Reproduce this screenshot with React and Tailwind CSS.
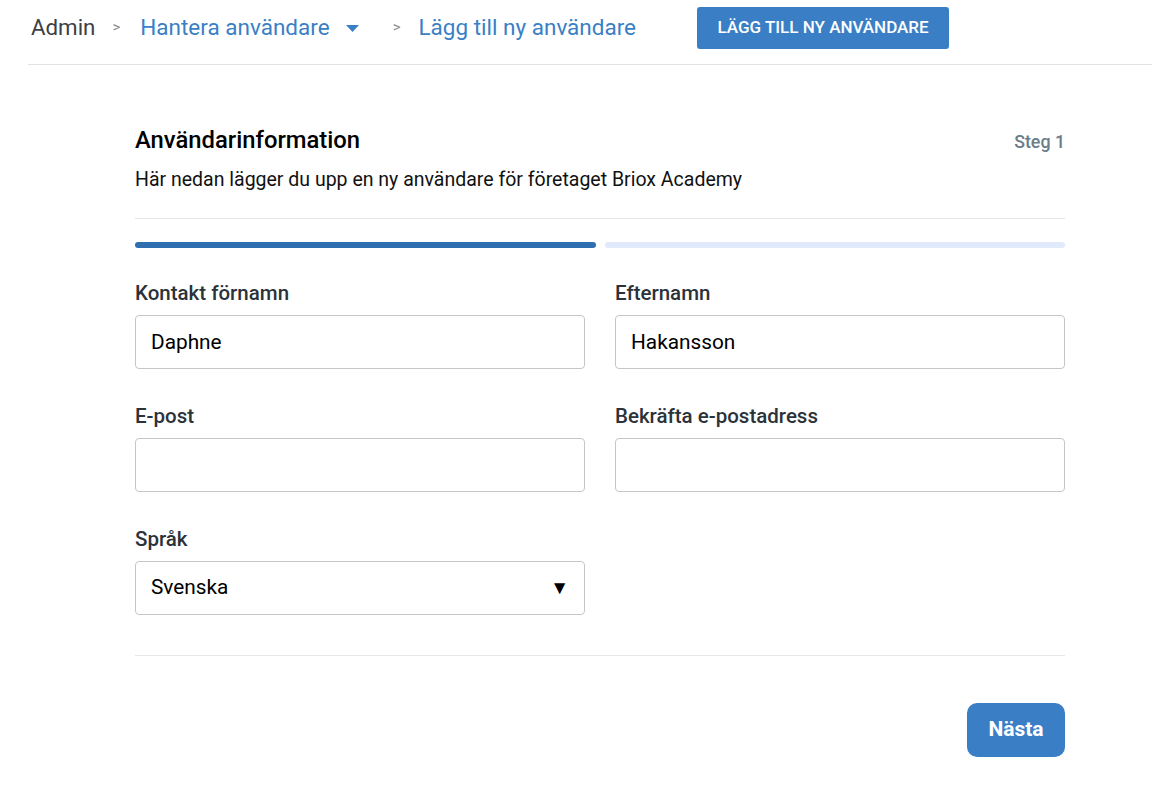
import { useState } from 'react'

function Field({ label, value, onChange }) {
  return (
    <div className="flex flex-col">
      <label className="mb-[10px] text-[20.5px] font-medium leading-[24px] text-[#2b323a]">{label}</label>
      <input
        value={value}
        onChange={e => onChange(e.target.value)}
        className="h-[54px] w-full rounded-[4px] border border-[#c6c6c6] px-[15px] text-[20.8px] text-black outline-none"
      />
    </div>
  )
}

export default function App() {
  const [fornamn, setFornamn] = useState('Daphne')
  const [efternamn, setEfternamn] = useState('Hakansson')
  const [epost, setEpost] = useState('')
  const [bekrafta, setBekrafta] = useState('')
  const [sprak, setSprak] = useState('Svenska')

  return (
    <div className="min-h-screen bg-white font-['Roboto',sans-serif]">
      {/* Breadcrumbs */}
      <div className="ml-[28px] flex h-[65px] items-center border-b border-[#e2e2e2] pl-[3px] pb-[9px]">
        <span className="text-[22.3px] text-[#3c4045]">Admin</span>
        <span className="ml-[17px] text-[15px] text-[#8a8a8a]">&gt;</span>
        <button className="ml-[20px] flex items-center text-[22.5px] text-[#3a7fc5]">
          Hantera användare
          <svg width="13" height="8" viewBox="0 0 13 8" className="ml-[16px] mt-[2px]">
            <path d="M0 0 L13 0 L6.5 7 Z" fill="#3a7fc5" />
          </svg>
        </button>
        <span className="ml-[34px] text-[15px] text-[#8a8a8a]">&gt;</span>
        <span className="ml-[18px] text-[22.5px] text-[#3a7fc5]">Lägg till ny användare</span>
        <button className="ml-[61px] h-[42px] w-[252px] rounded-[3px] bg-[#3a7fc5] text-[17px] font-medium uppercase text-white">
          Lägg till ny användare
        </button>
      </div>

      {/* Form card */}
      <div className="w-[930px] pt-[61px]" style={{ marginLeft: 135 }}>
        <div className="flex items-start justify-between">
          <h1 className="text-[23.8px] font-medium leading-[28px] text-black">Användarinformation</h1>
          <span className="mt-[3px] text-[17.8px] font-medium text-[#6b7c8a]">Steg 1</span>
        </div>
        <p className="mt-[12px] text-[19.5px] leading-[24px] text-[#111]">
          Här nedan lägger du upp en ny användare för företaget Briox Academy
        </p>
        <div className="mt-[26px] border-t border-[#e6e6e6]" />

        <div className="mt-[23px] flex gap-[9px]">
          <div className="h-[6px] flex-1 rounded-full bg-[#2f6fb0]" />
          <div className="h-[6px] flex-1 rounded-full bg-[#e1eafa]" />
        </div>

        <div className="mt-[33px] grid grid-cols-2 gap-x-[30px] gap-y-[35px]">
          <Field label="Kontakt förnamn" value={fornamn} onChange={setFornamn} />
          <Field label="Efternamn" value={efternamn} onChange={setEfternamn} />
          <Field label="E-post" value={epost} onChange={setEpost} />
          <Field label="Bekräfta e-postadress" value={bekrafta} onChange={setBekrafta} />
          <div className="flex flex-col">
            <label className="mb-[10px] text-[20.5px] font-medium leading-[24px] text-[#2b323a]">Språk</label>
            <div className="relative">
              <select
                value={sprak}
                onChange={e => setSprak(e.target.value)}
                className="h-[54px] w-full appearance-none rounded-[4px] border border-[#c6c6c6] bg-white px-[15px] text-[20.8px] text-black outline-none"
              >
                <option>Svenska</option>
                <option>English</option>
              </select>
              <span className="pointer-events-none absolute right-[16px] top-[13px] text-[19px] text-black">▼</span>
            </div>
          </div>
        </div>

        <div className="mt-[40px] border-t border-[#e6e6e6]" />

        <div className="mt-[47px] flex justify-end">
          <button className="h-[54px] w-[98px] rounded-[10px] bg-[#3a7fc5] text-[21px] font-bold text-white">
            Nästa
          </button>
        </div>
      </div>
    </div>
  )
}
